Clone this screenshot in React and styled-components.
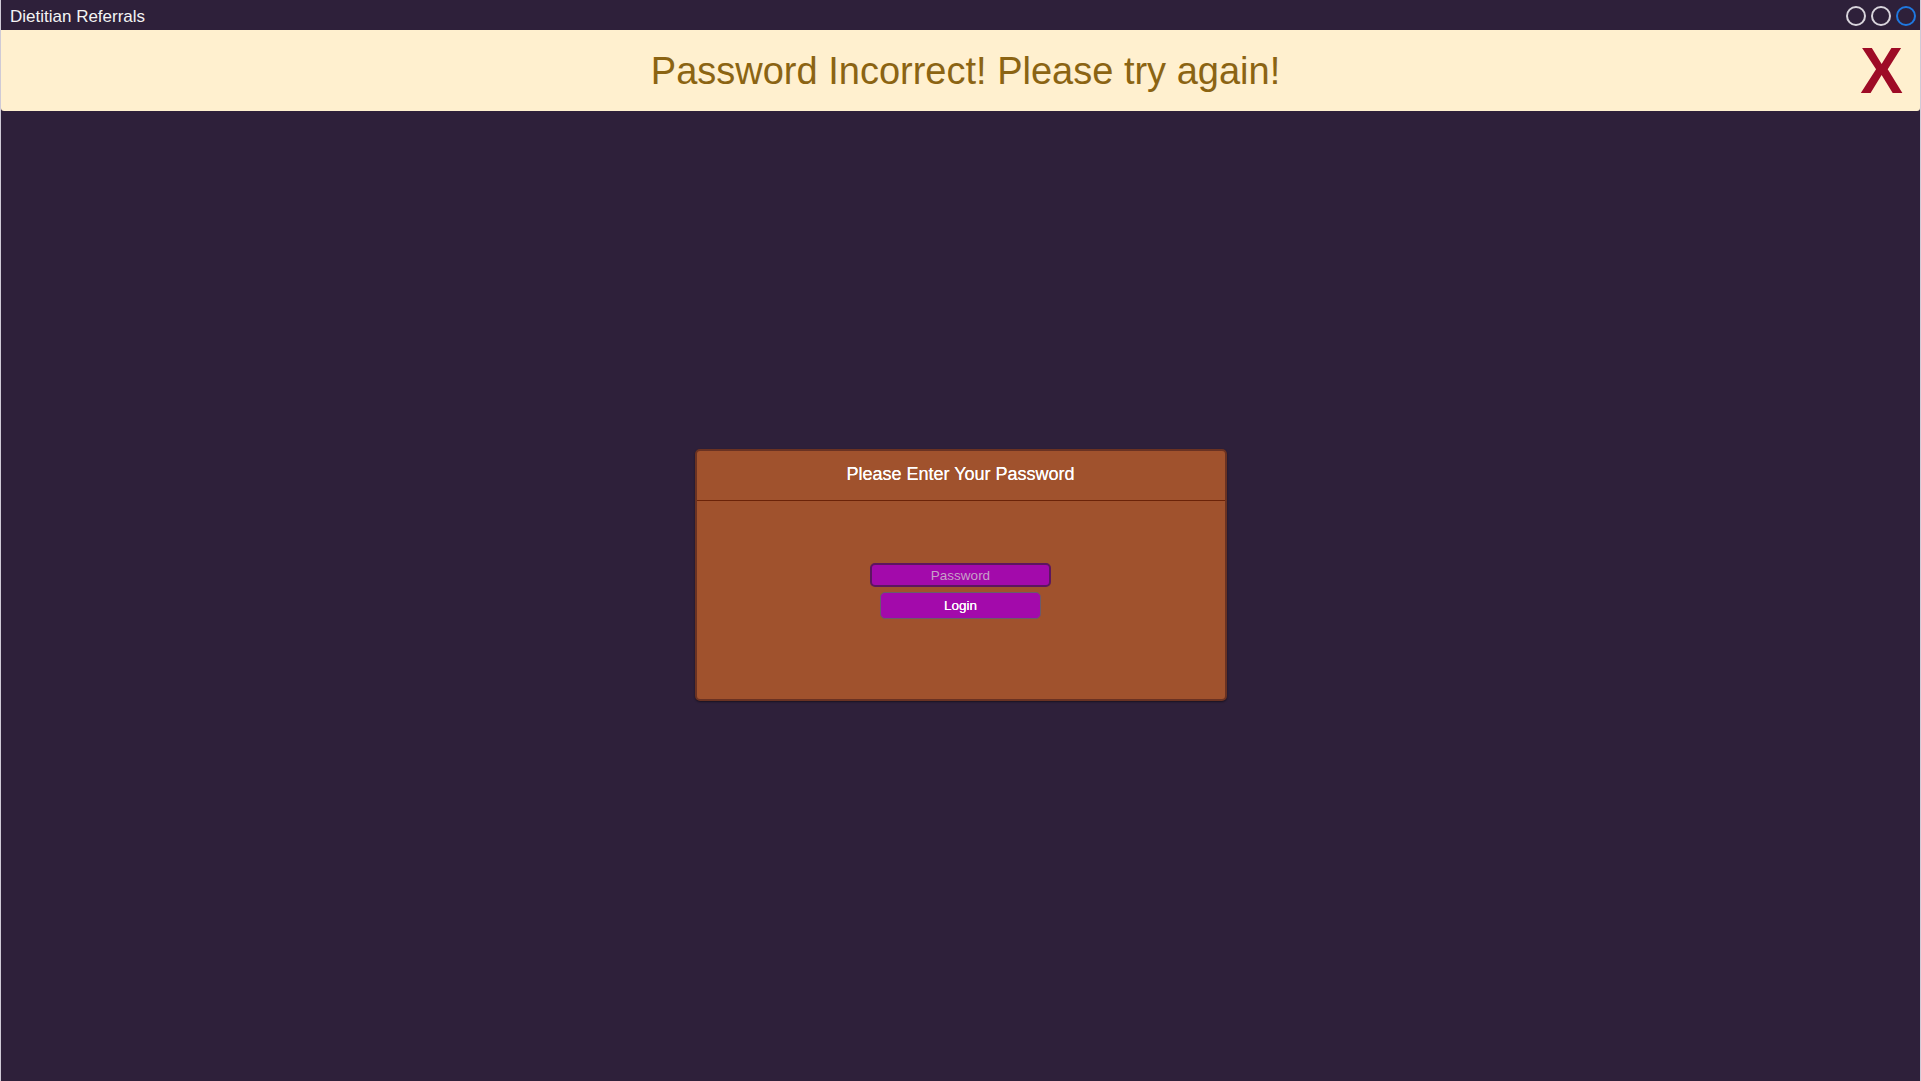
import styled, { createGlobalStyle } from 'styled-components'

const GlobalStyle = createGlobalStyle`
  html, body {
    margin: 0;
    padding: 0;
    height: 100%;
    background: #2e203a;
    font-family: 'Liberation Sans', Arial, sans-serif;
  }
  #root {
    height: 100%;
  }
`

const Screen = styled.div`
  height: 100vh;
  display: flex;
  flex-direction: column;
  box-sizing: border-box;
  border-left: 1px solid #cfcad6;
  border-right: 1px solid #cfcad6;
  overflow: hidden;
`

const TitleBar = styled.div`
  height: 30px;
  flex: none;
  display: flex;
  align-items: center;
  justify-content: space-between;
  padding: 0 4px 0 9px;
  color: #f4f4f4;
  font-size: 17px;
`

const Title = styled.span`
  padding-top: 3px;
`

const WindowButtons = styled.div`
  display: flex;
  gap: 5px;
  padding-top: 2px;
`

const Dot = styled.span`
  width: 16px;
  height: 16px;
  border-radius: 50%;
  border: 2px solid ${(p) => (p.$active ? '#1f78e0' : '#d8d4dc')};
`

const Banner = styled.div`
  height: 81px;
  flex: none;
  display: grid;
  grid-template-columns: 1fr auto 1fr;
  align-items: center;
  background: #fff0cf;
  border-radius: 0 0 3px 3px;
`

const Message = styled.div`
  grid-column: 2;
  color: #8b6413;
  font-size: 38px;
  padding-left: 10px;
  padding-top: 2px;
`

const Dismiss = styled.button`
  grid-column: 3;
  justify-self: end;
  margin-right: 17px;
  border: none;
  background: none;
  padding: 0;
  cursor: pointer;
  color: #9e0b26;
  font-family: 'Liberation Sans', Arial, sans-serif;
  font-weight: 700;
  font-size: 64px;
  line-height: 1;
`

const Main = styled.main`
  flex: 1;
  display: flex;
  align-items: center;
  justify-content: center;
  padding-bottom: 42px;
`

const Card = styled.section`
  width: 532px;
  height: 252px;
  box-sizing: border-box;
  background: #a0522d;
  border: 2px solid #6a3222;
  border-radius: 5px;
  box-shadow: 0 1px 2px rgba(0, 0, 0, 0.45);
  display: flex;
  flex-direction: column;
`

const CardHeader = styled.header`
  height: 50px;
  flex: none;
  box-sizing: border-box;
  border-bottom: 1px solid #6b2308;
  display: flex;
  align-items: center;
  justify-content: center;
  color: #ffffff;
  font-size: 18px;
  padding-bottom: 2px;
  text-shadow: 0 0 0.4px #ffffff;
`

const CardBody = styled.form`
  display: flex;
  flex-direction: column;
  align-items: center;
  gap: 5px;
  padding-top: 62px;
`

const PasswordInput = styled.input`
  width: 181px;
  height: 24px;
  box-sizing: border-box;
  background: #a30aab;
  border: 2px solid #5c1660;
  border-radius: 5px;
  color: #ffffff;
  font-family: 'Liberation Sans', Arial, sans-serif;
  font-size: 13.5px;
  text-align: center;
  padding: 0;
  outline: none;

  &::placeholder {
    color: #c7a0c8;
  }
`

const LoginButton = styled.button`
  width: 161px;
  height: 27px;
  box-sizing: border-box;
  background: #a30aab;
  border: 1px solid #6b5a6b;
  border-radius: 5px;
  color: #ffffff;
  font-family: 'Liberation Sans', Arial, sans-serif;
  font-size: 13.5px;
  font-weight: 400;
  text-shadow: 0 0 0.6px #ffffff;
  cursor: pointer;
`

export default function App() {
  return (
    <>
      <GlobalStyle />
      <Screen>
        <TitleBar>
          <Title>Dietitian Referrals</Title>
          <WindowButtons>
            <Dot />
            <Dot />
            <Dot $active />
          </WindowButtons>
        </TitleBar>
        <Banner>
          <Message>Password Incorrect! Please try again!</Message>
          <Dismiss type="button">X</Dismiss>
        </Banner>
        <Main>
          <Card>
            <CardHeader>Please Enter Your Password</CardHeader>
            <CardBody onSubmit={(e) => e.preventDefault()}>
              <PasswordInput type="password" placeholder="Password" />
              <LoginButton type="submit">Login</LoginButton>
            </CardBody>
          </Card>
        </Main>
      </Screen>
    </>
  )
}
